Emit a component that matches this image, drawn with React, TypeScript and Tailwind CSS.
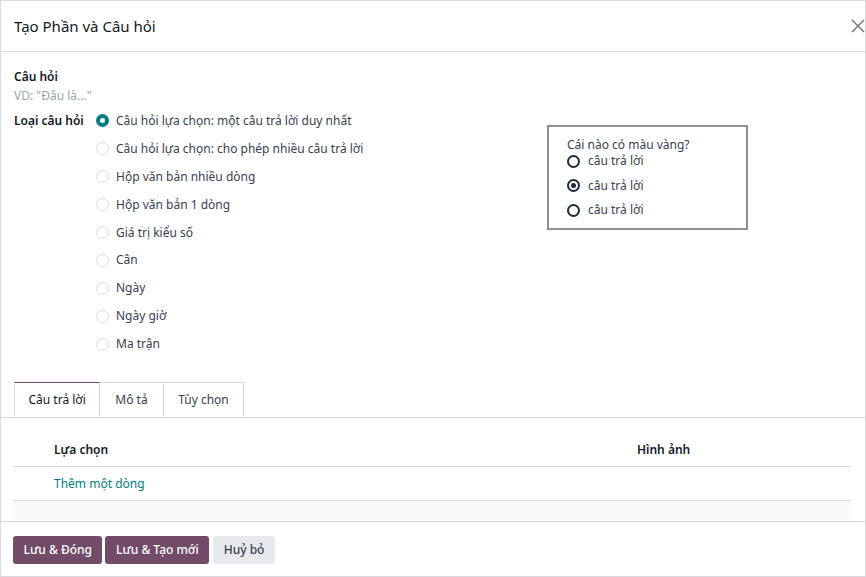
const types = [
  "Câu hỏi lựa chọn: một câu trả lời duy nhất",
  "Câu hỏi lựa chọn: cho phép nhiều câu trả lời",
  "Hộp văn bản nhiều dòng",
  "Hộp văn bản 1 dòng",
  "Giá trị kiểu số",
  "Cân",
  "Ngày",
  "Ngày giờ",
  "Ma trận",
]

function Radio({ checked }: { checked?: boolean }) {
  return checked ? (
    <span className="w-[13px] h-[13px] rounded-full border-[4px] border-[#017e84] bg-white shrink-0" />
  ) : (
    <span className="w-[13px] h-[13px] rounded-full border border-[#d8dadd] bg-white shrink-0" />
  )
}

function PreviewRadio({ checked }: { checked?: boolean }) {
  return (
    <span className="w-[13px] h-[13px] rounded-full border-2 border-[#1f2937] flex items-center justify-center shrink-0">
      {checked && <span className="w-[5px] h-[5px] rounded-full bg-[#1f2937]" />}
    </span>
  )
}

export default function App() {
  return (
    <div
      className="w-[866px] h-[577px] bg-white border border-[#d8dadd] flex flex-col text-[12px] text-[#374151]"
      style={{ fontFamily: '"Noto Sans", "Liberation Sans", sans-serif' }}
    >
      {/* Header */}
      <div className="h-[51px] shrink-0 flex items-center justify-between pl-[13px] border-b border-[#d8dadd]">
        <h4 className="text-[15px] text-[#111827]">Tạo Phần và Câu hỏi</h4>
        <svg width="14" height="14" viewBox="0 0 14 14" className="text-[#6b7280]">
          <path d="M1 1L13 13M13 1L1 13" stroke="currentColor" strokeWidth="1.4" />
        </svg>
      </div>

      {/* Body */}
      <div className="flex-1 px-[13px] pt-[15px]">
        <div className="font-semibold text-[#111827] leading-[19px]">Câu hỏi</div>
        <div className="text-[#9ca3af] leading-[19px]">VD: "Đâu là..."</div>

        <div className="flex mt-[2px]">
          <div className="w-[82px] shrink-0 h-[28px] flex items-center font-semibold text-[#111827]">Loại câu hỏi</div>
          <div className="w-[451px] shrink-0">
            {types.map((t, i) => (
              <div key={t} className="h-[27.9px] flex items-center gap-[7px]">
                <Radio checked={i === 0} />
                <span>{t}</span>
              </div>
            ))}
          </div>
          <div className="w-[201px] h-[105px] mt-[18px] border-2 border-[#8f9097] pl-[18px] pr-[16px] pt-[10px] text-[#374151]">
            <div className="leading-[16px]">Cái nào có màu vàng?</div>
            <div className="flex flex-col gap-[8.5px]">
              {[false, true, false].map((c, i) => (
                <div key={i} className="h-[16px] flex items-center gap-[8px]">
                  <PreviewRadio checked={c} />
                  <span>câu trả lời</span>
                </div>
              ))}
            </div>
          </div>
        </div>

        {/* Tabs */}
        <div className="-mx-[13px] px-[13px] mt-[24px] flex border-b border-[#d8dadd]">
          <div className="h-[35px] px-[13.5px] flex items-center border border-b-0 border-[#d8dadd] border-t-[#714b67] bg-white text-[#111827] -mb-px">
            Câu trả lời
          </div>
          <div className="h-[35px] px-[15px] flex items-center border border-l-0 border-b-0 border-[#d8dadd]">Mô tả</div>
          <div className="h-[35px] px-[14.5px] flex items-center border border-l-0 border-b-0 border-[#d8dadd]">Tùy chọn</div>
        </div>

        {/* Table */}
        <div className="mt-[15px] -ml-px w-[838px]">
          <div className="h-[34px] flex items-center border-b border-[#d8dadd] font-semibold text-[#111827]">
            <div className="w-[41px]" />
            <div className="w-[583px]">Lựa chọn</div>
            <div>Hình ảnh</div>
          </div>
          <div className="h-[34px] flex items-center border-b border-[#d8dadd]">
            <div className="w-[41px]" />
            <span className="text-[#017e84]">Thêm một dòng</span>
          </div>
          <div className="h-[20px] bg-[#f9fafb]" />
        </div>
      </div>

      {/* Footer */}
      <div className="h-[55px] shrink-0 border-t border-[#d8dadd] flex items-center gap-[3px] px-[12px] pt-px">
        <button className="h-[28px] px-[10.5px] rounded-[3px] bg-[#714b67] text-white font-medium">Lưu &amp; Đóng</button>
        <button className="h-[28px] px-[10.5px] rounded-[3px] bg-[#714b67] text-white font-medium">Lưu &amp; Tạo mới</button>
        <button className="h-[28px] px-[10.5px] rounded-[3px] bg-[#e7e9ed] text-[#374151] font-medium ml-px">Huỷ bỏ</button>
      </div>
    </div>
  )
}
